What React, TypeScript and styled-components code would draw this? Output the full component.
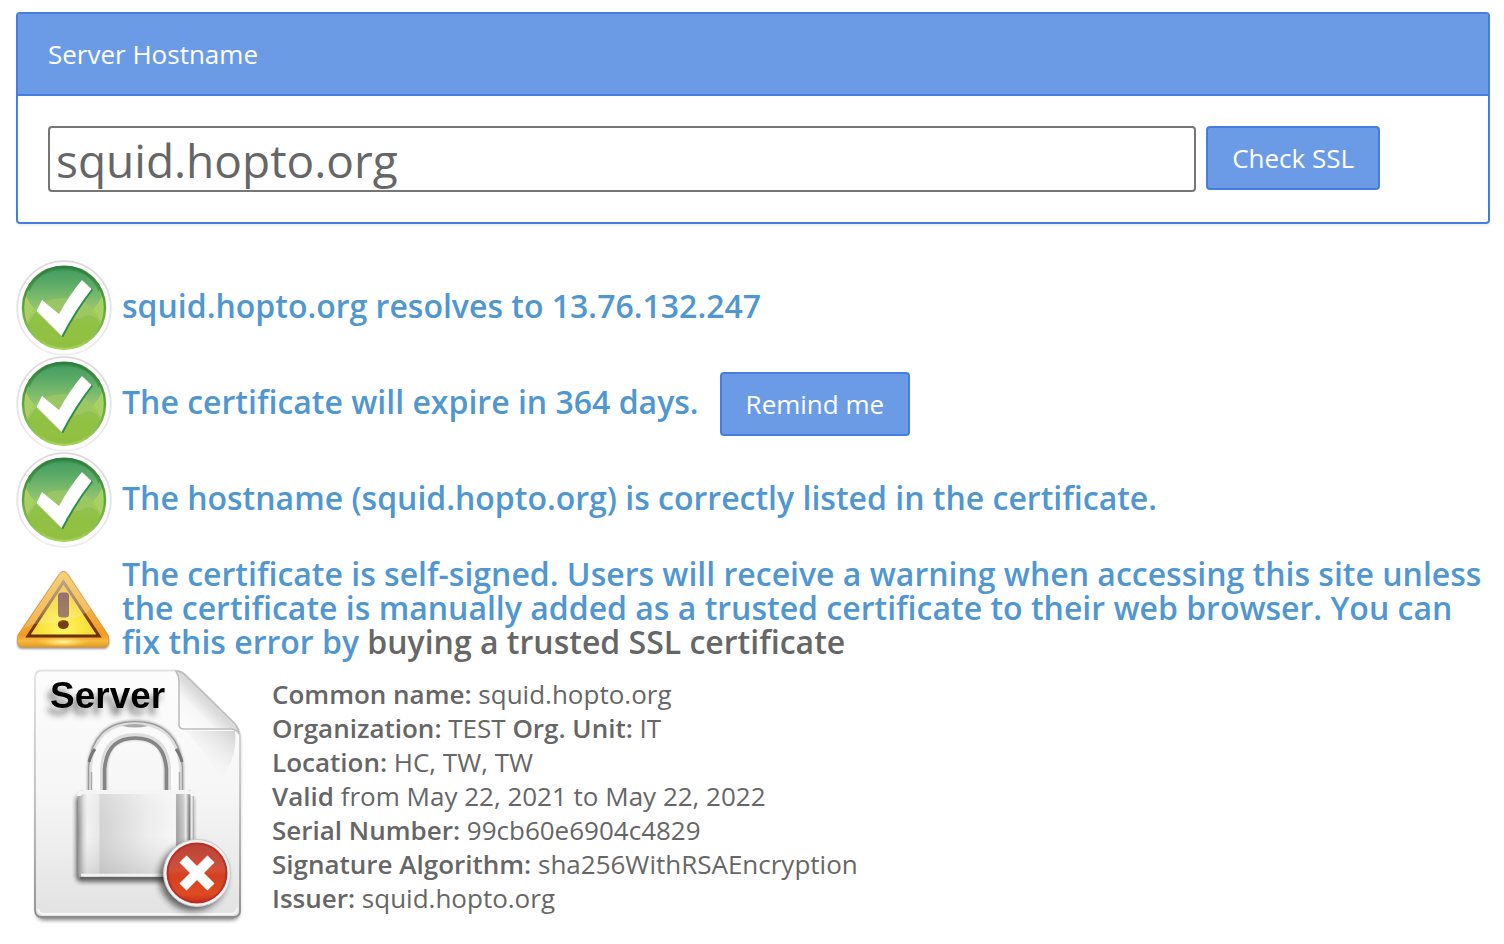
import React, { useState } from "react";
import styled, { createGlobalStyle } from "styled-components";

const GlobalStyle = createGlobalStyle`
  * { box-sizing: border-box; }
  body {
    margin: 0;
    background: #fff;
    color: #666;
    font-family: "Open Sans", "Liberation Sans", sans-serif;
    font-size: 26px;
    line-height: 34px;
  }
`;

const Page = styled.main`
  padding: 12px 14px 20px 16px;
`;

const Panel = styled.section`
  border: 2px solid #447fdf;
  border-radius: 4px;
  box-shadow: 0 2px 2px rgba(0, 0, 0, 0.06);
  margin-bottom: 36px;
`;

const PanelHeader = styled.div`
  padding: 23px 30px;
  background: #6c9be6;
  border-bottom: 2px solid #447fdf;
  color: #fff;
`;

const PanelTitle = styled.label`
  display: block;
`;

const HostForm = styled.form`
  display: flex;
  align-items: flex-start;
  gap: 10px;
  padding: 30px 108px 30px 30px;
`;

const HostInput = styled.input`
  flex: 1;
  min-width: 0;
  height: 66px;
  padding: 4px 6px 2px;
  border: 2px solid #767676;
  border-radius: 4px;
  background: #fff;
  color: #666;
  font-family: inherit;
  font-size: 46px;
  outline: none;
`;

const Button = styled.button`
  flex: none;
  height: 64px;
  padding: 0 24px;
  border: 2px solid #447fdf;
  border-radius: 4px;
  background: #6c9be6;
  color: #fff;
  font-family: inherit;
  font-size: 26px;
  line-height: 34px;
  cursor: pointer;
`;

const ResultList = styled.ul`
  list-style: none;
  margin: 0;
  padding: 0;
`;

const Result = styled.li<{ $tall?: boolean }>`
  display: flex;
  align-items: center;
  gap: 10px;
  min-height: 96px;
  padding: ${(p) => (p.$tall ? "9px 0 5px" : "0")};
`;

const ResultIcon = styled.svg`
  flex: none;
  display: block;
  width: 96px;
  height: 96px;
`;

const ResultText = styled.h3`
  margin: 0;
  padding-bottom: 4px;
  color: #5097d1;
  font-size: 32px;
  font-weight: 600;
  line-height: 34px;
`;

const ResultRow = styled.div`
  display: flex;
  align-items: center;
  gap: 21px;
`;

const BuyLink = styled.a`
  color: #666;
  text-decoration: none;
`;

const Certificate = styled.section`
  display: flex;
  align-items: flex-start;
`;

const ServerImage = styled.svg`
  flex: none;
  display: block;
  width: 256px;
  height: 256px;
`;

const Details = styled.div`
  padding-top: 9px;
`;

const Line = styled.p`
  margin: 0;
`;

const Term = styled.strong`
  font-weight: 600;
`;

function CheckIcon({ id }: { id: string }) {
  return (
    <ResultIcon viewBox="0 0 96 96" role="img" aria-label="Passed">
      <defs>
        <linearGradient id={`${id}-g`} x1="0" y1="0" x2="0" y2="1">
          <stop offset="0" stopColor="#3f9a62" />
          <stop offset="0.2" stopColor="#5caa66" />
          <stop offset="0.48" stopColor="#90c470" />
          <stop offset="0.7" stopColor="#93c248" />
          <stop offset="1" stopColor="#93c13e" />
        </linearGradient>
        <linearGradient id={`${id}-e`} x1="0" y1="0" x2="0" y2="1">
          <stop offset="0" stopColor="#2f7d3c" />
          <stop offset="0.5" stopColor="#5aa53f" />
          <stop offset="1" stopColor="#a5d05c" />
        </linearGradient>
        <linearGradient id={`${id}-r`} x1="0" y1="0" x2="0" y2="1">
          <stop offset="0" stopColor="#dadada" />
          <stop offset="1" stopColor="#eeeeee" />
        </linearGradient>
        <clipPath id={`${id}-c`}>
          <circle cx="48" cy="48" r="41" />
        </clipPath>
      </defs>
      <circle cx="48" cy="48" r="46.8" fill="#fdfdfd" stroke={`url(#${id}-r)`} strokeWidth="1.8" />
      <circle cx="48" cy="47.7" r="41" fill={`url(#${id}-g)`} />
      <g clipPath={`url(#${id}-c)`}>
        <path d="M8 30Q12 44 21 51Q13 56 10 66L2 60Z" fill="#a9d063" />
        <path d="M88 30Q84 44 75 51Q83 56 86 66L94 60Z" fill="#a9d063" />
        <path d="M10 66Q18 38 48 38Q78 38 86 66V96H10Z" fill="#8fbf43" opacity="0.6" />
        <path d="M10 66Q18 38 48 38Q78 38 86 66Q76 50 66 58Q40 64 21 51Z" fill="#fff" opacity="0.1" />
      </g>
      <path d="M12 30Q22 8 48 8Q74 8 84 30" fill="none" stroke="#2f7d3c" strokeWidth="4" opacity="0.45" />
      <circle cx="48" cy="47.7" r="41" fill="none" stroke={`url(#${id}-e)`} strokeWidth="2.4" />
      <path d="M27 41L22 51L47 77.500Q60 52 77 30L67 21Q56 34 44 55Z" fill="#2f8c4b" />
      <path d="M26 40L20.5 51L45.5 76Q59 50 75.5 29L66 20Q54 34 43 54Z" fill="#fff" />
    </ResultIcon>
  );
}

function WarningIcon() {
  return (
    <ResultIcon viewBox="0 0 96 96" role="img" aria-label="Warning">
      <defs>
        <linearGradient id="w-outer" x1="0" y1="0" x2="0" y2="1">
          <stop offset="0" stopColor="#f3c65a" />
          <stop offset="0.55" stopColor="#f2b03c" />
          <stop offset="0.84" stopColor="#f19c22" />
          <stop offset="0.92" stopColor="#f7b93c" />
          <stop offset="1" stopColor="#e69922" />
        </linearGradient>
        <radialGradient id="w-inner" cx="0.5" cy="0.85" r="0.8">
          <stop offset="0" stopColor="#fff95e" />
          <stop offset="0.5" stopColor="#f8dc36" />
          <stop offset="1" stopColor="#f1bd4c" />
        </radialGradient>
        <radialGradient id="w-glow">
          <stop offset="0" stopColor="#fffbb0" />
          <stop offset="1" stopColor="#ffe04a" stopOpacity="0" />
        </radialGradient>
        <linearGradient id="w-line" x1="0" y1="0" x2="0" y2="1">
          <stop offset="0" stopColor="#a98e6e" />
          <stop offset="0.5" stopColor="#94682c" />
          <stop offset="0.7" stopColor="#7c3f08" />
          <stop offset="1" stopColor="#6a2f08" />
        </linearGradient>
        <linearGradient id="w-bang" x1="0" y1="0" x2="0" y2="1">
          <stop offset="0" stopColor="#7f5054" />
          <stop offset="1" stopColor="#8f6540" />
        </linearGradient>
        <filter id="w-shadow" x="-10%" y="-10%" width="120%" height="125%">
          <feGaussianBlur stdDeviation="1" />
        </filter>
      </defs>
      <path d="M43.5 12Q47.5 7 51.5 12L92 74Q95 87 88 87H6Q-1 87 2 74Z" fill="#777" opacity="0.75" filter="url(#w-shadow)" />
      <path d="M43.5 12Q47.5 7 51.5 12L92 73Q95 85 88 85H6Q0 85 2 73Z" fill="url(#w-outer)" stroke="#d99b37" strokeWidth="1" />
      <ellipse cx="47" cy="80" rx="27" ry="5" fill="url(#w-glow)" />
      <path d="M47.5 20L83 74H12Z" fill="url(#w-inner)" stroke="url(#w-line)" strokeWidth="3" />
      <rect x="42" y="30.5" width="11" height="25" rx="3.5" fill="url(#w-bang)" />
      <ellipse cx="47.3" cy="62.5" rx="5.5" ry="4.5" fill="#773f14" />
      <path d="M43.5 12Q47.5 7 51.5 12L75 47Q58 62 17 62L8 66Z" fill="#fff" opacity="0.18" />
    </ResultIcon>
  );
}

function ServerCertificateImage() {
  return (
    <ServerImage viewBox="0 0 256 256" role="img" aria-label="Untrusted server certificate">
      <defs>
        <linearGradient id="s-page" x1="0" y1="0" x2="0" y2="1">
          <stop offset="0" stopColor="#fdfdfd" />
          <stop offset="0.5" stopColor="#f6f6f6" />
          <stop offset="1" stopColor="#e2e2e2" />
        </linearGradient>
        <linearGradient id="s-edge" x1="0" y1="0" x2="0" y2="1">
          <stop offset="0" stopColor="#e2e2e2" />
          <stop offset="0.5" stopColor="#c0c0c0" />
          <stop offset="1" stopColor="#8b8b8b" />
        </linearGradient>
        <linearGradient id="s-fold" x1="0" y1="1" x2="0.75" y2="0.25">
          <stop offset="0" stopColor="#fff" />
          <stop offset="0.45" stopColor="#f7f7f7" />
          <stop offset="0.68" stopColor="#d8d8d8" />
          <stop offset="0.85" stopColor="#fafafa" />
        </linearGradient>
        <linearGradient id="s-foldshade" x1="1" y1="0" x2="0.3" y2="0.8">
          <stop offset="0" stopColor="#d0d0d0" />
          <stop offset="1" stopColor="#f8f8f8" stopOpacity="0" />
        </linearGradient>
        <linearGradient id="s-body" x1="0" y1="0" x2="1" y2="0">
          <stop offset="0" stopColor="#8d8d8d" />
          <stop offset="0.05" stopColor="#dcdcdc" />
          <stop offset="0.08" stopColor="#f2f2f2" />
          <stop offset="0.18" stopColor="#e8e8e8" />
          <stop offset="0.19" stopColor="#d2d2d2" />
          <stop offset="0.6" stopColor="#ededed" />
          <stop offset="0.84" stopColor="#f7f7f7" />
          <stop offset="0.85" stopColor="#a0a0a0" />
          <stop offset="0.91" stopColor="#c8c8c8" />
          <stop offset="0.93" stopColor="#ededed" />
          <stop offset="0.96" stopColor="#777" />
          <stop offset="0.98" stopColor="#f4f4f4" />
          <stop offset="1" stopColor="#999" />
        </linearGradient>
        <linearGradient id="s-bodyshade" x1="0" y1="0" x2="0" y2="1">
          <stop offset="0" stopColor="#fff" stopOpacity="0.2" />
          <stop offset="0.5" stopColor="#ccc" stopOpacity="0" />
          <stop offset="1" stopColor="#999" stopOpacity="0.35" />
        </linearGradient>
        <linearGradient id="s-red" x1="0" y1="0" x2="0" y2="1">
          <stop offset="0" stopColor="#b94335" />
          <stop offset="0.45" stopColor="#d0503f" />
          <stop offset="0.55" stopColor="#cb3a22" />
          <stop offset="0.85" stopColor="#dc4d23" />
          <stop offset="1" stopColor="#c5281c" />
        </linearGradient>
        <filter id="s-blur1" x="-20%" y="-20%" width="140%" height="140%">
          <feGaussianBlur stdDeviation="1" />
        </filter>
        <filter id="s-blur2" x="-20%" y="-20%" width="140%" height="140%">
          <feGaussianBlur stdDeviation="2" />
        </filter>
        <filter id="s-blur3" x="-20%" y="-40%" width="140%" height="200%">
          <feGaussianBlur stdDeviation="3" />
        </filter>
        <filter id="s-textshadow" x="-20%" y="-40%" width="140%" height="200%">
          <feDropShadow dx="-4" dy="7" stdDeviation="3" floodColor="#333" floodOpacity="0.6" />
        </filter>
      </defs>

      <path d="M21 60V245Q21 252 28 252H215Q223 252 223 245V66Z" fill="#444" opacity="0.7" filter="url(#s-blur2)" />
      <path d="M26 2.5H159Q166 3 171 8L218 55Q224 61 224 70V243Q224 249 217 249H26Q19 249 19 242V10Q19 2.5 26 2.5Z" fill="url(#s-page)" stroke="url(#s-edge)" strokeWidth="1.8" />
      <path d="M22 241Q23 246 28 246H215Q221 246 221 240" fill="none" stroke="#fff" strokeWidth="2" opacity="0.7" />
      <path d="M170 63H219Q222 90 204 112Q196 92 170 63Z" fill="url(#s-foldshade)" />
      <path d="M160 3Q163 8 163 14V57Q163 61 168 61H214Q221 61 223 66Q222 58 216 53L170 8Q166 3 160 3Z" fill="url(#s-fold)" stroke="#bdbdbd" strokeWidth="1.6" />

      <text x="34" y="40" fontFamily="Liberation Sans, sans-serif" fontWeight="700" fontSize="37" fill="#000" filter="url(#s-textshadow)">Server</text>

      <path d="M81 123V101Q83 62 119 62Q156 62 158 101V123" fill="none" stroke="#777" strokeWidth="20" opacity="0.5" filter="url(#s-blur1)" />
      <path d="M81 123V101Q83 62 119 62Q156 62 158 101V123" fill="none" stroke="#999" strokeWidth="18" />
      <path d="M81 123V101Q83 62 119 62Q156 62 158 101V123" fill="none" stroke="#dedede" strokeWidth="15.5" />
      <path d="M80 123V101Q82 61 119 61Q157 61 159 101V123" fill="none" stroke="#fafafa" strokeWidth="8" />
      <path d="M88.5 123V101Q91 70 119 70Q148 70 150.5 101V123" fill="none" stroke="#858585" strokeWidth="3.5" />
      <path d="M75.5 123V104M163.500 123V104" fill="none" stroke="#aaa" strokeWidth="1.5" />
      <path d="M73 94Q75 86 79 81M166 94Q164 86 160 81" stroke="#777" strokeWidth="3" fill="none" />
      <path d="M106 58Q119 54 132 58Q119 61 106 58Z" fill="#aaa" />

      <rect x="60" y="127" width="117" height="87" rx="5" fill="#222" opacity="0.65" filter="url(#s-blur2)" />
      <rect x="62" y="122" width="116" height="89" rx="5" fill="url(#s-body)" />
      <rect x="62" y="122" width="116" height="89" rx="5" fill="url(#s-bodyshade)" />
      <path d="M63 128Q63 124 68 124H172Q177 124 177 128" fill="none" stroke="#f5f5f5" strokeWidth="4" />
      <path d="M64 210H174" stroke="#666" strokeWidth="2" />
      <path d="M65 207H174" stroke="#f2f2f2" strokeWidth="2.5" />

      <circle cx="177" cy="209" r="34" fill="#222" opacity="0.65" filter="url(#s-blur3)" />
      <circle cx="181" cy="205" r="33.5" fill="#f3f3f3" stroke="#c9c9c9" strokeWidth="1" />
      <circle cx="181" cy="205" r="29.5" fill="url(#s-red)" stroke="#b92f25" strokeWidth="2" />
      <path d="M153 204Q181 181 209 204Q207 226 181 232Q155 226 153 204Z" fill="#e14b20" opacity="0.35" />
      <path d="M167 191L195 219M195 191L167 219" stroke="#fff" strokeWidth="10" />
    </ServerImage>
  );
}

export default function App() {
  const [host, setHost] = useState("squid.hopto.org");
  return (
    <Page>
      <GlobalStyle />
      <Panel>
        <PanelHeader>
          <PanelTitle htmlFor="hostname">Server Hostname</PanelTitle>
        </PanelHeader>
        <HostForm onSubmit={(e) => e.preventDefault()}>
          <HostInput id="hostname" type="text" spellCheck={false} value={host} onChange={(e) => setHost(e.target.value)} />
          <Button type="submit">Check SSL</Button>
        </HostForm>
      </Panel>

      <ResultList>
        <Result>
          <CheckIcon id="resolve" />
          <ResultText>squid.hopto.org resolves to 13.76.132.247</ResultText>
        </Result>
        <Result>
          <CheckIcon id="expire" />
          <ResultRow>
            <ResultText>The certificate will expire in 364 days.</ResultText>
            <Button type="button">Remind me</Button>
          </ResultRow>
        </Result>
        <Result>
          <CheckIcon id="listed" />
          <ResultText>The hostname (squid.hopto.org) is correctly listed in the certificate.</ResultText>
        </Result>
        <Result $tall>
          <WarningIcon />
          <ResultText>
            The certificate is self-signed. Users will receive a warning when accessing this site unless the
            certificate is manually added as a trusted certificate to their web browser. You can fix this error by{" "}
            <BuyLink href="#buy">buying a trusted SSL certificate</BuyLink>
          </ResultText>
        </Result>
      </ResultList>

      <Certificate>
        <ServerCertificateImage />
        <Details>
          <Line><Term>Common name:</Term> squid.hopto.org</Line>
          <Line><Term>Organization:</Term> TEST <Term>Org. Unit:</Term> IT</Line>
          <Line><Term>Location:</Term> HC, TW, TW</Line>
          <Line><Term>Valid</Term> from May 22, 2021 to May 22, 2022</Line>
          <Line><Term>Serial Number:</Term> 99cb60e6904c4829</Line>
          <Line><Term>Signature Algorithm:</Term> sha256WithRSAEncryption</Line>
          <Line><Term>Issuer:</Term> squid.hopto.org</Line>
        </Details>
      </Certificate>
    </Page>
  );
}
